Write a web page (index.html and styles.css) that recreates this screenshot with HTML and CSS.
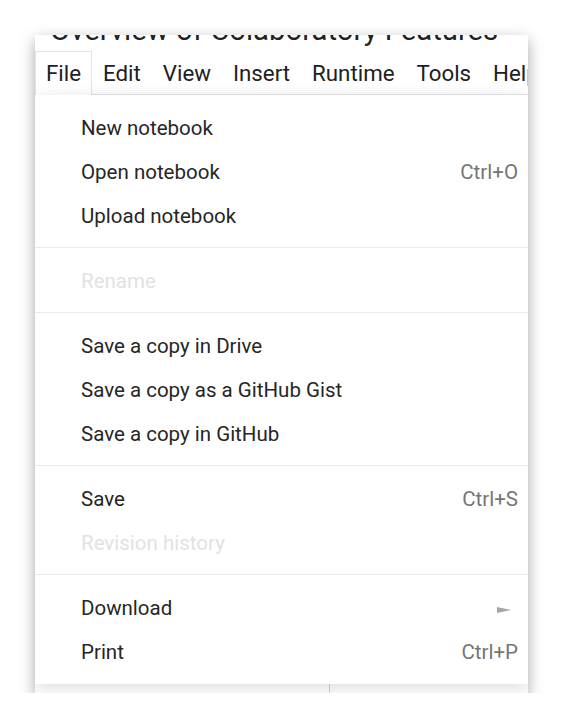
FILE: index.html
```html
<!DOCTYPE html>
<html lang="en">
<head>
<meta charset="utf-8">
<title>Colaboratory – File menu</title>
<link rel="stylesheet" href="styles.css">
</head>
<body>
<div class="window">
  <div class="title">Overview of Colaboratory Features</div>
  <div class="menubar">
    <div class="mb-item active">File</div>
    <div class="mb-item">Edit</div>
    <div class="mb-item">View</div>
    <div class="mb-item">Insert</div>
    <div class="mb-item">Runtime</div>
    <div class="mb-item">Tools</div>
    <div class="mb-item">Help</div>
  </div>
  <div class="workspace">
    <div class="page">
      <div class="pane-left"></div>
      <div class="pane-right"></div>
    </div>
    <div class="menu">
      <div class="mi"><span>New notebook</span></div>
      <div class="mi"><span>Open notebook</span><span class="sc">Ctrl+O</span></div>
      <div class="mi"><span>Upload notebook</span></div>
      <div class="sep"></div>
      <div class="mi disabled"><span>Rename</span></div>
      <div class="sep"></div>
      <div class="mi"><span>Save a copy in Drive</span></div>
      <div class="mi"><span>Save a copy as a GitHub Gist</span></div>
      <div class="mi"><span>Save a copy in GitHub</span></div>
      <div class="sep"></div>
      <div class="mi"><span>Save</span><span class="sc">Ctrl+S</span></div>
      <div class="mi disabled"><span>Revision history</span></div>
      <div class="sep"></div>
      <div class="mi"><span>Download</span><svg class="sub" width="14" height="6" viewBox="0 0 14 6"><polygon points="0,0 14,3 0,6"/></svg></div>
      <div class="mi"><span>Print</span><span class="sc">Ctrl+P</span></div>
    </div>
  </div>
</div>
</body>
</html>
```

FILE: styles.css
```css
html, body {
  margin: 0;
  padding: 0;
  background: #ffffff;
}

body {
  font-family: Roboto, "Liberation Sans", sans-serif;
}

.window {
  margin: 35px 0 0 35px;
  width: 493px;
  height: 658px;
  display: flex;
  flex-direction: column;
  overflow: hidden;
  position: relative;
  background: #ffffff;
  box-shadow: 0 5px 14px rgba(0, 0, 0, 0.35);
}

.title {
  flex-shrink: 0;
  margin-top: -20px;
  height: 30px;
  line-height: 30px;
  padding-left: 15px;
  font-size: 29.3px;
  color: #212121;
  white-space: nowrap;
}

.menubar {
  flex-shrink: 0;
  margin-top: 6px;
  display: flex;
  border-bottom: 1px solid #e3e3e3;
  font-size: 22.3px;
  color: #212121;
}

.mb-item {
  flex-shrink: 0;
  padding: 0 10px;
  line-height: 42px;
  border: 1px solid transparent;
  border-bottom: 0;
  white-space: nowrap;
}

.mb-item.active {
  border-color: #e3e3e3;
  background: #ffffff;
  padding-bottom: 1px;
  margin-bottom: -1px;
  position: relative;
}

.workspace {
  flex: 1;
  position: relative;
}

.page {
  display: flex;
  height: 100%;
}

.pane-left {
  width: 294px;
  border-right: 1px solid #d4d4d4;
}

.pane-right {
  flex: 1;
}

.menu {
  position: absolute;
  top: 0;
  left: 0;
  right: 0;
  background: #ffffff;
  padding: 10px 0 11px;
  box-shadow: 0 4px 16px rgba(0, 0, 0, 0.14);
}

.mi {
  box-sizing: border-box;
  display: flex;
  align-items: center;
  justify-content: space-between;
  height: 44px;
  padding: 1px 10px 0 46px;
  font-size: 20.5px;
  color: #262626;
  white-space: nowrap;
}

.mi.disabled {
  color: #e2e2e2;
}

.sc {
  color: #757575;
}

.sub {
  fill: #a6a6a6;
  margin-right: 7px;
  margin-top: 4px;
}

.sep {
  height: 1px;
  background: #ececec;
  margin: 10px 0;
}
```
